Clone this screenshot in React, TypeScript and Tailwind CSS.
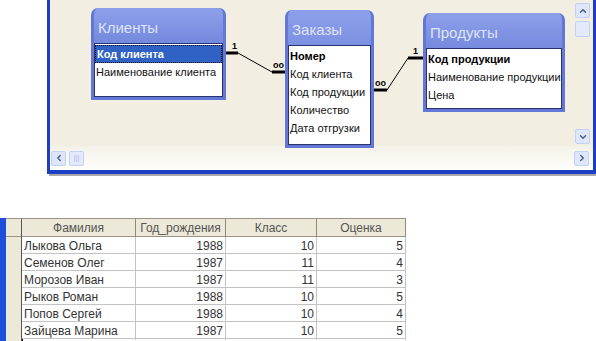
import { ChevronDown, ChevronLeft, ChevronRight, ChevronUp } from 'lucide-react';

const font = { fontFamily: '"Liberation Sans", Arial, sans-serif' };

type Field = { name: string; key?: boolean; selected?: boolean };

function TableBox({
  title,
  fields,
  className,
}: {
  title: string;
  fields: Field[];
  className: string;
}) {
  return (
    <div
      className={`absolute flex flex-col rounded-t-[7px] border-[3px] border-t-0 border-[#6377d6] bg-gradient-to-b from-[#8ea0ea] via-[#6d82da] to-[#6377d6] ${className}`}
    >
      <div className="flex h-[35px] shrink-0 items-center px-[4px] pt-[5px] text-[15px] text-[#dfe4f8]">
        {title}
      </div>
      <div className="flex-1 border border-[#2a3170] bg-white pt-[1px]">
        {fields.map((f) => (
          <div
            key={f.name}
            className={`flex h-[18px] items-center whitespace-nowrap px-[1px] text-[11px] leading-none ${
              f.selected
                ? 'border border-dotted border-[#111] bg-[#3062c6] font-bold text-white'
                : f.key
                  ? 'font-bold text-black'
                  : 'text-[#111]'
            }`}
          >
            {f.name}
          </div>
        ))}
      </div>
    </div>
  );
}

function ScrollBtn({ children }: { children: React.ReactNode }) {
  return (
    <div className="flex h-[15px] w-[15px] items-center justify-center rounded-[2px] border border-[#c3d1f5] bg-[#dde6fb] text-[#4d6185]">
      {children}
    </div>
  );
}

function Relations() {
  return (
    <svg className="absolute left-0 top-0" width="540" height="148">
      <g stroke="#000" fill="none">
        <path d="M176 53 H188" strokeWidth="3" />
        <path d="M188 53 L222 72" strokeWidth="1" />
        <path d="M222 72 H235" strokeWidth="3" />
        <path d="M324 90 H337" strokeWidth="3" />
        <path d="M337 90 L358 58" strokeWidth="1" />
        <path d="M358 58 H373" strokeWidth="3" />
      </g>
      <g fontSize="9" fontWeight="bold" fill="#000" style={font}>
        <text x="182" y="49">1</text>
        <text x="223" y="68">oo</text>
        <text x="325" y="86">oo</text>
        <text x="363" y="54">1</text>
      </g>
    </svg>
  );
}

const rows: [string, number, number, number][] = [
  ['Лыкова Ольга', 1988, 10, 5],
  ['Семенов Олег', 1987, 11, 4],
  ['Морозов Иван', 1987, 11, 3],
  ['Рыков Роман', 1988, 10, 5],
  ['Попов Сергей', 1988, 10, 4],
  ['Зайцева Марина', 1987, 10, 5],
];

const cols = 'grid grid-cols-[16px_114px_90px_91px_89px]';

export default function App() {
  return (
    <div className="h-[341px] w-[596px] overflow-hidden bg-white" style={font}>
      {/* relationship window */}
      <div className="ml-[47px] flex h-[174px] w-[549px] flex-col border-x-[3px] border-b-[4px] border-[#1b3fc4]">
        <div className="flex h-[146px] bg-[#f2efe2]">
          <div className="relative flex-1">
            <Relations />
            <TableBox
              title="Клиенты"
              className="left-[41px] top-[8px] h-[92px] w-[135px]"
              fields={[
                { name: 'Код клиента', selected: true },
                { name: 'Наименование клиента' },
              ]}
            />
            <TableBox
              title="Заказы"
              className="left-[235px] top-[10px] h-[138px] w-[89px]"
              fields={[
                { name: 'Номер', key: true },
                { name: 'Код клиента' },
                { name: 'Код продукции' },
                { name: 'Количество' },
                { name: 'Дата отгрузки' },
              ]}
            />
            <TableBox
              title="Продукты"
              className="left-[373px] top-[13px] h-[99px] w-[142px]"
              fields={[
                { name: 'Код продукции', key: true },
                { name: 'Наименование продукции' },
                { name: 'Цена' },
              ]}
            />
          </div>
          <div className="flex w-[20px] flex-col items-start gap-[3px] pt-[3px] pb-[2px] pl-[2px]">
            <ScrollBtn>
              <ChevronUp size={10} strokeWidth={3.5} />
            </ScrollBtn>
            <div className="h-[16px] w-[15px] rounded-[2px] border border-[#c3d1f5] bg-[#e3eafb]" />
            <div className="flex-1" />
            <ScrollBtn>
              <ChevronDown size={10} strokeWidth={3.5} />
            </ScrollBtn>
          </div>
        </div>
        <div className="flex flex-1 items-center gap-[3px] bg-gradient-to-b from-[#f4f2e8] to-[#fdfdfb] pl-[1px] pr-[4px]">
          <ScrollBtn>
            <ChevronLeft size={10} strokeWidth={3.5} />
          </ScrollBtn>
          <div className="flex h-[15px] w-[15px] items-center justify-center rounded-[2px] border border-[#c3d1f5] bg-[#e3eafb] text-[7px] text-[#a8b6dc]">
            |||
          </div>
          <div className="flex-1" />
          <ScrollBtn>
            <ChevronRight size={10} strokeWidth={3.5} />
          </ScrollBtn>
        </div>
      </div>
      <div className="ml-[49px] h-[2px] w-[547px] bg-[#a9a9a9]" />

      {/* datasheet */}
      <div className="mt-[42px] flex">
        <div className="h-[130px] w-[6px] bg-[#1d4fd8]" />
        <div className="flex flex-col text-[12px] text-[#333]">
          <div className={`${cols} h-[19px] border-y border-[#9a9486] bg-[#ece9d8]`}>
            <div className="border-r border-[#555]" />
            {['Фамилия', 'Год_рождения', 'Класс', 'Оценка'].map((h) => (
              <div
                key={h}
                className="flex items-center justify-center border-r border-[#8f8a7a] text-[#555]"
              >
                {h}
              </div>
            ))}
          </div>
          {rows.map((r) => (
            <div key={r[0]} className={`${cols} h-[17px] border-b border-[#c3c3c3]`}>
              <div className="border-r border-[#555] bg-[#ece9d8] shadow-[inset_0_-1px_0_#8f8a7a]" />
              <div className="flex items-center border-r border-[#c3c3c3] pl-[2px]">{r[0]}</div>
              <div className="flex items-center justify-end border-r border-[#c3c3c3] pr-[2px]">{r[1]}</div>
              <div className="flex items-center justify-end border-r border-[#c3c3c3] pr-[2px]">{r[2]}</div>
              <div className="flex items-center justify-end border-r border-[#c3c3c3] pr-[2px]">{r[3]}</div>
            </div>
          ))}
          <div className={`${cols} h-[6px]`}>
            <div className="border-r border-[#555] bg-[#ece9d8]" />
            <div className="border-l border-black" />
          </div>
        </div>
      </div>
    </div>
  );
}
